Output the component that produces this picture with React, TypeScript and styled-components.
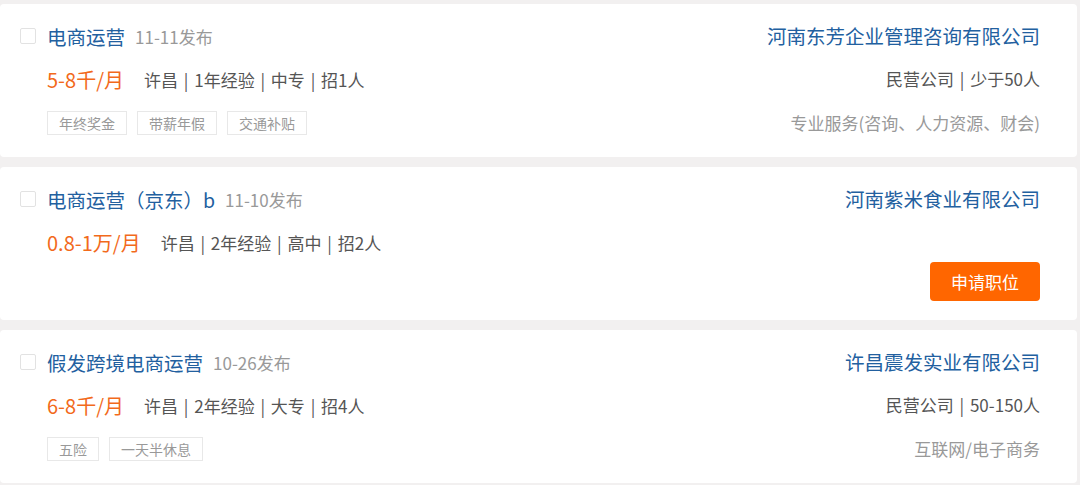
import styled, { createGlobalStyle } from "styled-components";

const GlobalStyle = createGlobalStyle`
  body {
    margin: 0;
    background: #f2f0f0;
    font-family: "Noto Sans CJK SC", "Noto Sans", sans-serif;
  }
`

const List = styled.div`
  display: flex;
  flex-direction: column;
  gap: 10px;
  padding: 4px 3px 0 0;
`

const Card = styled.div`
  display: flex;
  justify-content: space-between;
  height: 153px;
  box-sizing: border-box;
  padding: 16px 37px 0 20px;
  background: #fff;
  border-radius: 4px;
`

const Left = styled.div`
  display: flex;
  flex-direction: column;
`

const Right = styled.div`
  display: flex;
  flex-direction: column;
  align-items: flex-end;
`

const TitleRow = styled.div`
  display: flex;
  align-items: center;
  height: 32px;
`

const Check = styled.span`
  width: 14px;
  height: 14px;
  border: 1px solid #e2e2e2;
  border-radius: 2px;
  margin-right: 11px;
`

const Title = styled.span`
  font-size: 19.5px;
  color: #22609f;
  margin-right: 10px;
`

const Date = styled.span`
  font-size: 17px;
  color: #999;
`

const InfoRow = styled.div`
  display: flex;
  align-items: center;
  height: 30px;
  margin: 12px 0 0 27px;
`

const Salary = styled.span`
  font-size: 20px;
  color: #f26a1b;
  margin-right: 20px;
`

const Info = styled.span`
  font-size: 17px;
  color: #555;
  word-spacing: 2px;
`

const Tags = styled.div`
  display: flex;
  gap: 10px;
  margin: 17px 0 0 27px;
`

const Tag = styled.span`
  height: 24px;
  line-height: 22px;
  box-sizing: border-box;
  padding: 0 11px;
  border: 1px solid #e8e8e8;
  font-size: 14px;
  color: #999;
`

const Company = styled.div`
  height: 32px;
  line-height: 32px;
  font-size: 19.5px;
  color: #22609f;
`

const CompanyInfo = styled.div`
  height: 30px;
  line-height: 30px;
  margin-top: 12px;
  font-size: 17px;
  color: #555;
  word-spacing: 2px;
`

const Industry = styled.div`
  height: 30px;
  line-height: 30px;
  margin-top: 14px;
  font-size: 17px;
  color: #999;
`

const ApplyButton = styled.button`
  width: 110px;
  height: 39px;
  margin-top: 47px;
  border: none;
  border-radius: 4px;
  background: #ff6600;
  color: #fff;
  font-family: inherit;
  font-size: 17px;
`

type Job = {
  title: string;
  date: string;
  salary: string;
  info: string;
  tags: string[];
  company: string;
  companyInfo?: string;
  industry?: string;
  apply?: boolean;
}

const jobs: Job[] = [
  {
    title: "电商运营",
    date: "11-11发布",
    salary: "5-8千/月",
    info: "许昌 | 1年经验 | 中专 | 招1人",
    tags: ["年终奖金", "带薪年假", "交通补贴"],
    company: "河南东芳企业管理咨询有限公司",
    companyInfo: "民营公司 | 少于50人",
    industry: "专业服务(咨询、人力资源、财会)",
  },
  {
    title: "电商运营（京东）b",
    date: "11-10发布",
    salary: "0.8-1万/月",
    info: "许昌 | 2年经验 | 高中 | 招2人",
    tags: [],
    company: "河南紫米食业有限公司",
    apply: true,
  },
  {
    title: "假发跨境电商运营",
    date: "10-26发布",
    salary: "6-8千/月",
    info: "许昌 | 2年经验 | 大专 | 招4人",
    tags: ["五险", "一天半休息"],
    company: "许昌震发实业有限公司",
    companyInfo: "民营公司 | 50-150人",
    industry: "互联网/电子商务",
  },
]

const App = () => {
  return (
    <>
      <GlobalStyle />
      <List>
        {jobs.map(job => (
          <Card key={job.title}>
            <Left>
              <TitleRow>
                <Check />
                <Title>{job.title}</Title>
                <Date>{job.date}</Date>
              </TitleRow>
              <InfoRow>
                <Salary>{job.salary}</Salary>
                <Info>{job.info}</Info>
              </InfoRow>
              {job.tags.length > 0 && (
                <Tags>
                  {job.tags.map(t => <Tag key={t}>{t}</Tag>)}
                </Tags>
              )}
            </Left>
            <Right>
              <Company>{job.company}</Company>
              {job.apply ? (
                <ApplyButton>申请职位</ApplyButton>
              ) : (
                <>
                  <CompanyInfo>{job.companyInfo}</CompanyInfo>
                  <Industry>{job.industry}</Industry>
                </>
              )}
            </Right>
          </Card>
        ))}
      </List>
    </>
  );
}

export default App;
